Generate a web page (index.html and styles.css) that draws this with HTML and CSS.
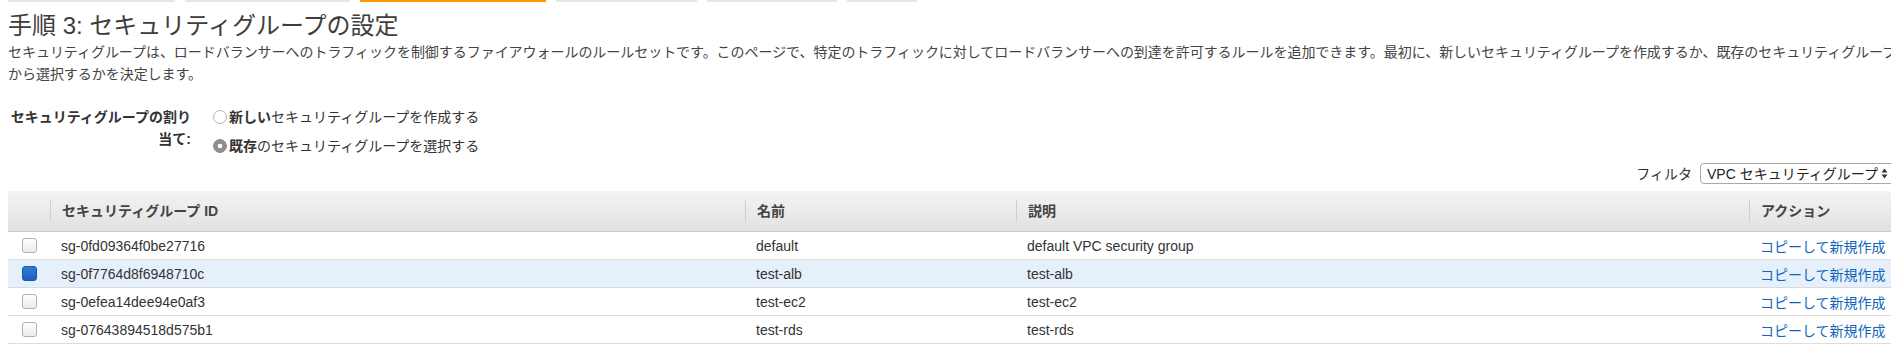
FILE: index.html
```html
<!DOCTYPE html>
<html lang="ja">
<head>
    <meta charset="UTF-8">
    <title>手順 3: セキュリティグループの設定</title>
    <link rel="stylesheet" href="styles.css">
</head>
<body>
    <div class="page">
        <div class="steps">
            <span class="step step-1"></span>
            <span class="step step-2"></span>
            <span class="step step-3 current"></span>
            <span class="step step-4"></span>
            <span class="step step-5"></span>
            <span class="step step-6"></span>
        </div>

        <h1 class="title">手順 3: セキュリティグループの設定</h1>
        <p class="intro">セキュリティグループは、ロードバランサーへのトラフィックを制御するファイアウォールのルールセットです。このページで、特定のトラフィックに対してロードバランサーへの到達を許可するルールを追加できます。最初に、新しいセキュリティグループを作成するか、既存のセキュリティグループから選択するかを決定します。</p>

        <div class="assign">
            <div class="assign-label">セキュリティグループの割り当て:</div>
            <div class="assign-options">
                <div class="option"><span class="radio"></span><b>新しい</b>セキュリティグループを作成する</div>
                <div class="option"><span class="radio checked"></span><b>既存</b>のセキュリティグループを選択する</div>
            </div>
        </div>

        <div class="filter">
            <span>フィルタ</span>
            <span class="select">VPC セキュリティグループ
                <svg class="arrows" width="7" height="11" viewBox="0 0 7 11"><path d="M3.5 0.5 L6.5 4.5 H0.5 Z M3.5 10.5 L6.5 6.5 H0.5 Z" fill="#333"/></svg>
            </span>
        </div>

        <table class="groups">
            <colgroup>
                <col class="col-check">
                <col class="col-id">
                <col class="col-name">
                <col class="col-desc">
                <col class="col-action">
            </colgroup>
            <thead>
                <tr>
                    <th></th>
                    <th><span class="th-label">セキュリティグループ ID</span></th>
                    <th><span class="th-label">名前</span></th>
                    <th><span class="th-label">説明</span></th>
                    <th><span class="th-label">アクション</span></th>
                </tr>
            </thead>
            <tbody>
                <tr>
                    <td class="cell-check"><span class="checkbox"></span></td>
                    <td>sg-0fd09364f0be27716</td>
                    <td>default</td>
                    <td>default VPC security group</td>
                    <td><a href="#" class="copy">コピーして新規作成</a></td>
                </tr>
                <tr class="selected">
                    <td class="cell-check"><span class="checkbox checked"></span></td>
                    <td>sg-0f7764d8f6948710c</td>
                    <td>test-alb</td>
                    <td>test-alb</td>
                    <td><a href="#" class="copy">コピーして新規作成</a></td>
                </tr>
                <tr>
                    <td class="cell-check"><span class="checkbox"></span></td>
                    <td>sg-0efea14dee94e0af3</td>
                    <td>test-ec2</td>
                    <td>test-ec2</td>
                    <td><a href="#" class="copy">コピーして新規作成</a></td>
                </tr>
                <tr>
                    <td class="cell-check"><span class="checkbox"></span></td>
                    <td>sg-07643894518d575b1</td>
                    <td>test-rds</td>
                    <td>test-rds</td>
                    <td><a href="#" class="copy">コピーして新規作成</a></td>
                </tr>
            </tbody>
        </table>
    </div>
</body>
</html>
```

FILE: styles.css
```css
body {
    margin: 0;
    background-color: #ffffff;
    color: #444444;
    font-family: "Liberation Sans", "Noto Sans CJK JP", sans-serif;
    font-size: 14px;
    overflow: hidden;
}

.page {
    width: 1910px;
    padding: 0 8px;
}

/* wizard step tabs, only their bottom edge is visible */
.steps {
    display: flex;
    gap: 10px;
    height: 2px;
}

.step {
    background-color: #e6e6e6;
}

.step.current { background-color: #ff9900; }

.step-1 { width: 167px; }
.step-2 { width: 165px; }
.step-3 { width: 186px; }
.step-4 { width: 141px; }
.step-5 { width: 130px; }
.step-6 { width: 70px; }

.title {
    margin: 9px 0 0;
    font-size: 24px;
    font-weight: normal;
    line-height: 30px;
    color: #3d3d3d;
}

.intro {
    width: 1897px;
    margin: 0;
    line-height: 22px;
    letter-spacing: -0.04px;
}

.assign {
    display: flex;
    margin-top: 21px;
}

.assign-label {
    width: 183px;
    font-weight: bold;
    text-align: right;
    line-height: 22px;
    color: #333333;
}

.assign-options {
    margin-left: 22px;
}

.option {
    display: flex;
    align-items: center;
    line-height: 22px;
    color: #333333;
}

.option + .option {
    margin-top: 7px;
}

.radio {
    width: 12px;
    height: 12px;
    border: 1px solid #b4b4b4;
    border-radius: 50%;
    background-color: #ffffff;
    margin-right: 2px;
}

.radio.checked {
    border-color: #8a8a8a;
    background: radial-gradient(circle, #ffffff 0 2px, #8e8e8e 2.6px);
}

.filter {
    display: flex;
    justify-content: flex-end;
    align-items: center;
    gap: 8px;
    margin-top: 6px;
    height: 20px;
    color: #333333;
}

.select {
    display: inline-flex;
    align-items: center;
    gap: 3px;
    box-sizing: border-box;
    width: 218px;
    height: 21px;
    padding-left: 6px;
    border: 1px solid #a9a9a9;
    border-radius: 4px;
    font-size: 14px;
    color: #222222;
    white-space: nowrap;
}

.arrows {
    flex: none;
}

.groups {
    width: 1910px;
    margin-top: 8px;
    border-collapse: separate;
    border-spacing: 0;
    table-layout: fixed;
}

.col-check { width: 42px; }
.col-id { width: 695px; }
.col-name { width: 271px; }
.col-desc { width: 733px; }
.col-action { width: 169px; }

.groups th {
    height: 40px;
    padding: 0;
    text-align: left;
    font-weight: bold;
    color: #444444;
    background: linear-gradient(#f3f3f3, #e2e2e2);
    border-bottom: 1px solid #c9c9c9;
}

.th-label {
    display: block;
    line-height: 22px;
    padding-left: 11px;
    border-left: 1px solid #cfcfcf;
}

.groups td {
    height: 27px;
    padding: 0 0 0 11px;
    border-bottom: 1px solid #dddddd;
    color: #333333;
    white-space: nowrap;
    overflow: hidden;
}

.groups td.cell-check {
    padding-left: 14px;
}

.groups tr.selected td {
    background-color: #e6f0fb;
    border-bottom-color: #d4dbe4;
}

.checkbox {
    display: block;
    box-sizing: border-box;
    width: 15px;
    height: 15px;
    border: 1px solid #b0b0b0;
    border-radius: 3px;
    background: linear-gradient(#ffffff, #ebebeb);
}

.checkbox.checked {
    border-color: #1b56a6;
    background: linear-gradient(#3179d8, #1a5fbf);
}

.copy {
    color: #1166bb;
    text-decoration: none;
}
```
